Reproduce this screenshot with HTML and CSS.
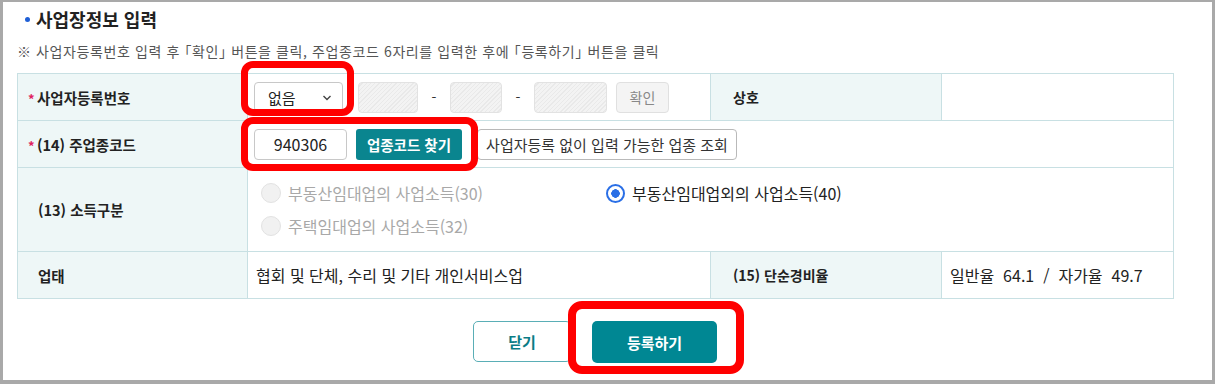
FILE: index.html
```html
<!DOCTYPE html>
<html lang="ko">
<head>
    <meta charset="UTF-8">
    <title>사업장정보 입력</title>
    <link rel="stylesheet" href="styles.css">
</head>
<body>
    <div class="frame">
        <h2 class="title"><i class="dot"></i>사업장정보 입력</h2>
        <p class="note">※ 사업자등록번호 입력 후 「확인」 버튼을 클릭, 주업종코드 6자리를 입력한 후에 「등록하기」 버튼을 클릭</p>

        <table class="form">
            <colgroup>
                <col class="c1"><col class="c2"><col class="c3"><col class="c4">
            </colgroup>
            <tr class="r1">
                <th><span class="req">*</span>사업자등록번호</th>
                <td>
                    <div class="line">
                        <div class="select">없음<svg class="chev" width="10" height="6" viewBox="0 0 10 6"><path d="M1.5 1l3.5 3.5L8.5 1" fill="none" stroke="#444" stroke-width="1.4"/></svg></div>
                        <span class="hatch w1"></span>
                        <span class="dash">-</span>
                        <span class="hatch w2"></span>
                        <span class="dash">-</span>
                        <span class="hatch w3"></span>
                        <button class="btn-gray">확인</button>
                    </div>
                </td>
                <th>상호</th>
                <td></td>
            </tr>
            <tr class="r2">
                <th><span class="req">*</span>(14) 주업종코드</th>
                <td colspan="3">
                    <div class="line">
                        <div class="code">940306</div>
                        <button class="btn-teal">업종코드 찾기</button>
                        <button class="btn-white">사업자등록 없이 입력 가능한 업종 조회</button>
                    </div>
                </td>
            </tr>
            <tr class="r3">
                <th>(13) 소득구분</th>
                <td colspan="3">
                    <div class="radios">
                        <label class="radio off"><span class="circle"></span>부동산임대업의 사업소득(30)</label>
                        <label class="radio on"><span class="circle"></span>부동산임대업외의 사업소득(40)</label>
                        <label class="radio off"><span class="circle"></span>주택임대업의 사업소득(32)</label>
                    </div>
                </td>
            </tr>
            <tr class="r4">
                <th>업태</th>
                <td>협회 및 단체, 수리 및 기타 개인서비스업</td>
                <th>(15) 단순경비율</th>
                <td>일반율&nbsp; 64.1 &nbsp;/&nbsp; 자가율&nbsp; 49.7</td>
            </tr>
        </table>

        <div class="actions">
            <button class="btn-close">닫기</button>
            <button class="btn-submit">등록하기</button>
        </div>

        <!-- 강조 표시 -->
        <div class="mark m1"></div>
        <div class="mark m2"></div>
        <div class="mark m3"></div>
    </div>
</body>
</html>
```

FILE: styles.css
```css
*{margin:0; padding:0; box-sizing:border-box;}
body{font-family:"Noto Sans CJK KR","Noto Sans",sans-serif; color:#222; background:#fff;}
button{font-family:inherit; cursor:pointer;}

.frame{position:relative; width:1215px; height:384px; border:solid #a9a9a9; border-width:2px 3px 4px 3px; padding:6px 0 0 14px;}

.title{display:flex; align-items:center; height:22px; font-size:18px; font-weight:700; color:#222; padding-left:8px;}
.dot{display:block; width:5px; height:5px; border-radius:50%; background:#1f5fd6; margin-right:6px;}
.note{margin-top:12px; height:18px; line-height:18px; font-size:14px; letter-spacing:0.6px; color:#555; font-feature-settings:"halt";}

.form{margin-top:13px; width:1156px; border-collapse:collapse; table-layout:fixed; font-size:16px;}
.c1{width:230px;} .c2{width:463px;} .c3{width:231px;} .c4{width:232px;}
.form th,.form td{border:1px solid #c8e0e3; vertical-align:middle;}
.form th{background:#eef7f7; text-align:left; font-weight:700; font-size:14.5px; padding-left:20px; color:#222;}
.form td{padding:0 8px; background:#fff;}
.r1{height:47px;} .r2{height:47px;} .r3{height:84px;} .r4{height:47px;}
.r1 th:nth-child(3),.r4 th:nth-child(3){padding-left:22px; font-size:14px;}
.req{display:inline-block; width:9px; margin-left:-10px; color:#e0245e; font-size:13px;}

.line{display:flex; align-items:center;}
.select{display:flex; align-items:center; justify-content:space-between; width:89px; height:30px; border:1px solid #c8c8c8; border-radius:4px; padding:0 10px 0 13px; font-size:15px; margin-left:-2px;}
.chev{margin-top:1px;}
.hatch{display:block; height:31px; border:1px solid #e2e2e2; border-radius:4px; background:repeating-linear-gradient(135deg,#f3f3f3 0,#f3f3f3 2px,#e9e9e9 2px,#e9e9e9 3px);}
.w1{width:60px; margin-left:15px;}
.w2{width:52px;}
.w3{width:73px;}
.dash{width:32px; text-align:center; font-size:14px; color:#333;}
.btn-gray{margin-left:9px; width:53px; height:31px; border:1px solid #e0e0e0; border-radius:4px; background:#f4f4f4; color:#888; font-size:14px;}

.code{width:93px; height:31px; border:1px solid #c8c8c8; border-radius:4px; text-align:center; line-height:29px; font-size:16px; margin-left:-2px;}
.btn-teal{margin-left:9px; width:106px; height:31px; border:none; border-radius:3px; background:#0a858f; color:#fff; font-size:14.5px; font-weight:700;}
.btn-white{margin-left:15px; width:260px; height:31px; border:1px solid #b9b9b9; border-radius:4px; background:#fff; color:#333; font-size:15px;}

.radios{display:grid; grid-template-columns:345px auto; row-gap:12px; padding-left:6px;}
.radio{display:flex; align-items:center; height:21px; font-size:16px;}
.circle{display:block; width:20px; height:20px; border-radius:50%; margin-right:7px; margin-left:-1px;}
.off{color:#a8a8a8;}
.off .circle{background:#f1f1f1; border:1px solid #e2e2e2;}
.on{color:#222;}
.on .circle{width:19px; height:19px; border:2px solid #2a6fe6; background:radial-gradient(circle,#2a6fe6 0,#2a6fe6 4px,#fff 4.5px); margin-right:7px;}

.actions{display:flex; justify-content:center; gap:21px; width:1156px; margin-top:22px;}
.btn-close{width:98px; height:41px; border:1px solid #5aaeb6; border-radius:5px; background:#fff; color:#0a7c86; font-size:15px; font-weight:700;}
.btn-submit{width:125px; height:42px; border:none; border-radius:5px; background:#008793; color:#fff; font-size:15px; font-weight:700;}

.mark{position:absolute; border:7px solid #f00; border-radius:12px;}
.m1{left:238px; top:59px; width:113px; height:55px;}
.m2{left:238px; top:115px; width:237px; height:54px;}
.m3{left:565px; top:299px; width:176px; height:73px; border-width:8px; border-radius:14px;}
```
